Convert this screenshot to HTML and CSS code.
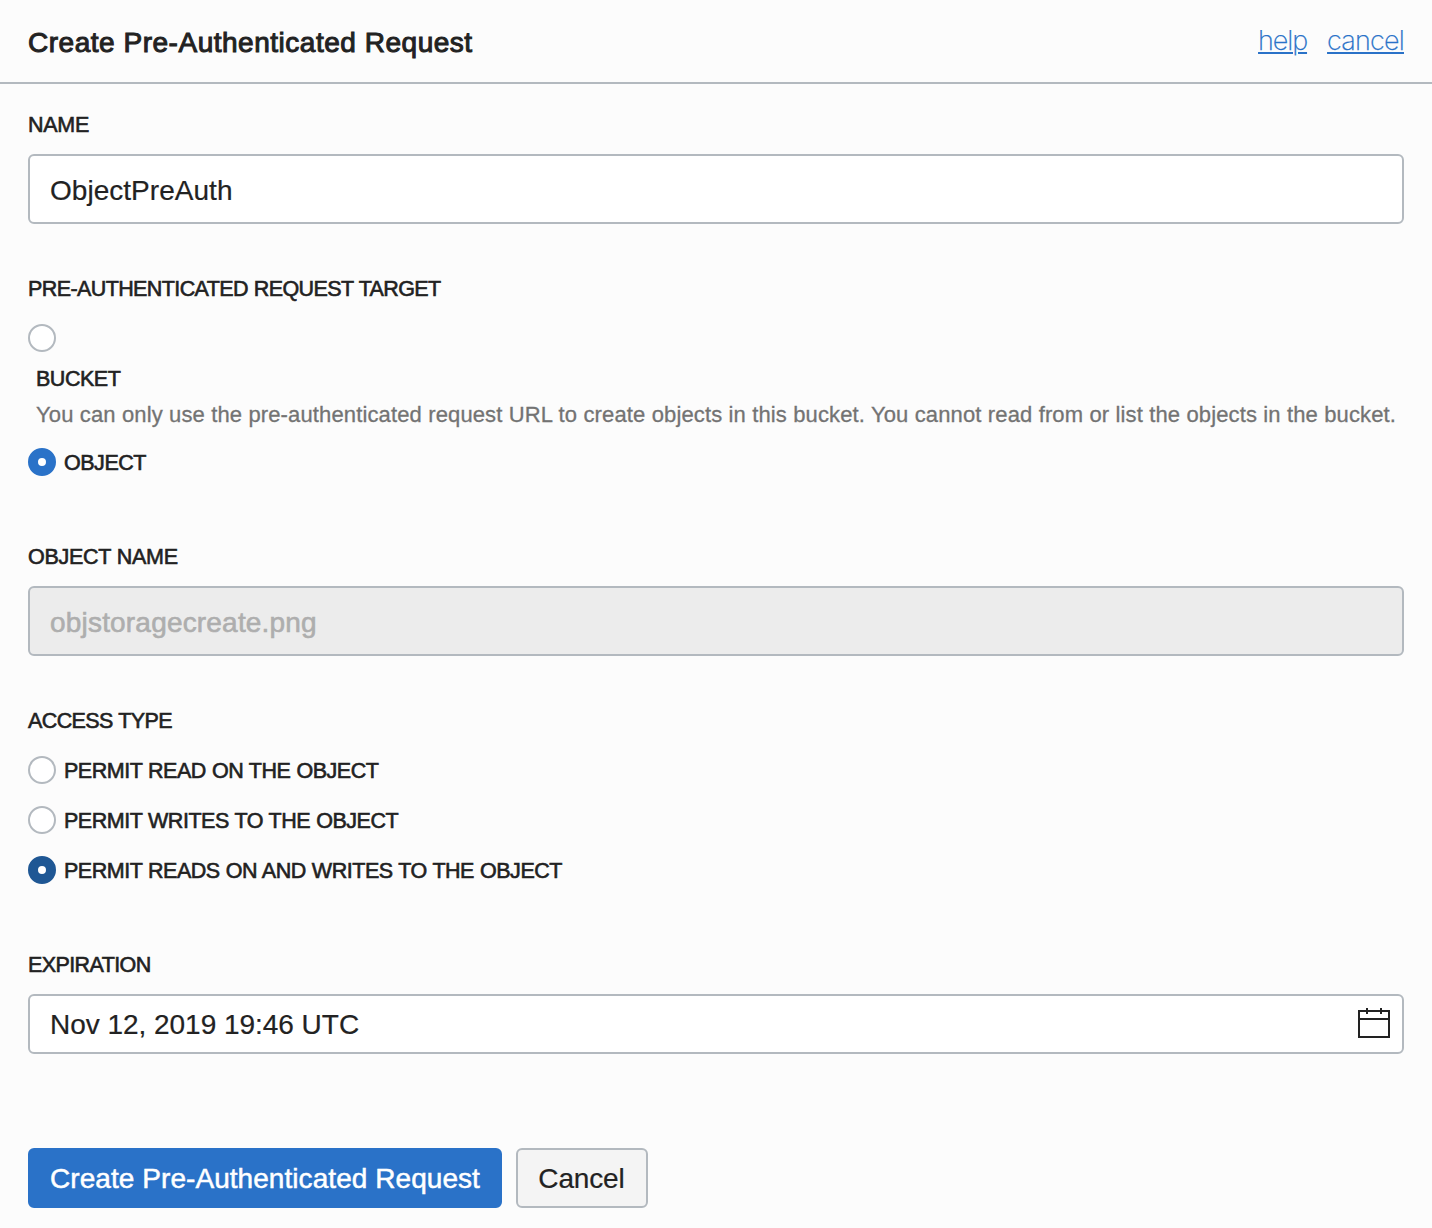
FILE: index.html
```html
<!DOCTYPE html>
<html lang="en">
<head>
<meta charset="utf-8">
<title>Create Pre-Authenticated Request</title>
<link rel="stylesheet" href="styles.css">
</head>
<body>
<header class="header">
  <h1 class="title">Create Pre-Authenticated Request</h1>
  <nav class="links">
    <a class="link" href="#">help</a>
    <a class="link link-cancel" href="#">cancel</a>
  </nav>
</header>
<form class="form">
  <section class="field">
    <label class="label label-wide" for="name">NAME</label>
    <input class="input" id="name" type="text" value="ObjectPreAuth">
  </section>

  <section class="field target">
    <div class="label label-tight">PRE-AUTHENTICATED REQUEST TARGET</div>
    <div class="options">
      <div class="bucket">
        <input class="radio" id="bucket" type="radio" name="target">
        <div class="bucket-text">
          <label class="label" for="bucket">BUCKET</label>
          <p class="hint">You can only use the pre-authenticated request URL to create objects in this bucket. You cannot read from or list the objects in the bucket.</p>
        </div>
      </div>
      <label class="option"><input class="radio" type="radio" name="target" checked><span class="label">OBJECT</span></label>
    </div>
  </section>

  <section class="field object">
    <label class="label label-wide" for="object">OBJECT NAME</label>
    <input class="input input-disabled" id="object" type="text" value="objstoragecreate.png" disabled>
  </section>

  <section class="field access">
    <div class="label label-tight">ACCESS TYPE</div>
    <div class="options options-access">
      <label class="option"><input class="radio" type="radio" name="access"><span class="label">PERMIT READ ON THE OBJECT</span></label>
      <label class="option"><input class="radio" type="radio" name="access"><span class="label">PERMIT WRITES TO THE OBJECT</span></label>
      <label class="option"><input class="radio radio-active" type="radio" name="access" checked><span class="label">PERMIT READS ON AND WRITES TO THE OBJECT</span></label>
    </div>
  </section>

  <section class="field expiration">
    <label class="label label-tight" for="date">EXPIRATION</label>
    <div class="date">
      <input class="date-input" id="date" type="text" value="Nov 12, 2019 19:46 UTC">
      <svg class="calendar" viewBox="0 0 32 30" width="32" height="30" fill="none" stroke="#222" stroke-width="2" shape-rendering="crispEdges"><path d="M1 3H31V29H1ZM1 11H31M9 0V6M23 0V6"/></svg>
    </div>
  </section>

  <div class="actions">
    <button class="button button-primary" type="button">Create Pre-Authenticated Request</button>
    <button class="button button-cancel" type="button">Cancel</button>
  </div>
</form>
</body>
</html>
```

FILE: styles.css
```css
* { box-sizing: border-box; }

body {
  margin: 0;
  background: #fcfcfc;
  color: #222;
  font-family: "Liberation Sans", Arial, sans-serif;
  font-size: 28px;
}

.header {
  display: flex;
  justify-content: space-between;
  height: 84px;
  padding: 27px 28px 0;
  border-bottom: 2px solid #b3b9bf;
}

.title {
  margin: 0;
  font-size: 28px;
  font-weight: 400;
  line-height: 31px;
  letter-spacing: 0.52px;
  -webkit-text-stroke: 1px #222;
}

.links {
  display: flex;
  gap: 20px;
  margin-top: -3px;
}

.link {
  color: #2a72c8;
  font-family: Inter, sans-serif;
  font-size: 27px;
  font-weight: 200;
  line-height: 33px;
  letter-spacing: -1.1px;
  text-decoration-line: underline;
  text-decoration-thickness: 2px;
  text-underline-offset: 2px;
  -webkit-text-stroke: 0.25px #2a72c8;
}

.link-cancel { letter-spacing: -0.8px; }

.form { padding: 28px 28px 20px; }

.field {
  display: flex;
  flex-direction: column;
  gap: 16px;
}

.label {
  padding-top: 1px;
  font-size: 21.5px;
  line-height: 25px;
  letter-spacing: -0.47px;
  word-spacing: 0.5px;
  -webkit-text-stroke: 0.6px #222;
}

.label-tight { letter-spacing: -0.6px; }
.label-wide { letter-spacing: -0.3px; }

.input {
  width: 100%;
  height: 70px;
  margin: 0;
  padding: 3px 20px 0;
  border: 2px solid #b3b9bf;
  border-radius: 6px;
  background: #fff;
  color: #222;
  font: inherit;
  letter-spacing: 0.03px;
  -webkit-text-stroke: 0.2px #222;
}

.input-disabled {
  background: #ececec;
  color: #aeaeae;
  letter-spacing: 0.19px;
  -webkit-text-stroke: 0.6px #aeaeae;
}

.target {
  gap: 22px;
  margin-top: 52px;
}

.options {
  display: flex;
  flex-direction: column;
  gap: 21px;
}

.options-access { gap: 22px; }

.bucket {
  display: flex;
  flex-direction: column;
  gap: 14px;
}

.bucket-text {
  display: flex;
  flex-direction: column;
  gap: 10px;
  padding-left: 8px;
}

.hint {
  margin: 0;
  color: #737373;
  font-size: 22px;
  line-height: 25px;
  letter-spacing: 0.135px;
  white-space: nowrap;
  -webkit-text-stroke: 0.3px #737373;
}

.option {
  display: flex;
  align-items: center;
  gap: 8px;
  height: 28px;
}

.option .label { padding-top: 3px; }

.radio {
  flex: none;
  width: 28px;
  height: 28px;
  margin: 0;
  border: 2px solid #b3b9bf;
  border-radius: 50%;
  background: #fff;
  appearance: none;
}

.radio:checked { border: 10px solid #2a72c8; }
.radio-active:checked { border-color: #1f5794; }

.object { margin-top: 68px; }

.access {
  gap: 22px;
  margin-top: 52px;
}

.expiration { margin-top: 68px; }

.date {
  display: flex;
  align-items: center;
  height: 60px;
  padding: 0 12px 0 20px;
  border: 2px solid #b3b9bf;
  border-radius: 6px;
  background: #fff;
}

.date-input {
  flex: 1;
  height: 56px;
  padding: 2px 0 0;
  border: 0;
  background: none;
  color: #222;
  font: inherit;
  letter-spacing: -0.03px;
  -webkit-text-stroke: 0.2px #222;
}

.calendar { margin-top: -2px; }

.actions {
  display: flex;
  gap: 14px;
  margin-top: 94px;
}

.button {
  height: 60px;
  padding: 0;
  border: 2px solid #b3b9bf;
  border-radius: 6px;
  background: #f4f4f4;
  color: #222;
  font: inherit;
  line-height: 31px;
}

.button-primary {
  width: 474px;
  border-color: #2a72c8;
  background: #2a72c8;
  color: #fff;
  letter-spacing: 0.06px;
  -webkit-text-stroke: 0.5px #fff;
}

.button-cancel {
  width: 132px;
  padding-right: 1px;
  letter-spacing: -0.15px;
  -webkit-text-stroke: 0.2px #222;
}
```
